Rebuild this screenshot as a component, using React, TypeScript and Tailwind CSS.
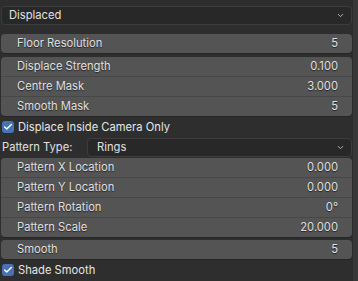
import { Check, ChevronDown } from 'lucide-react';

const font = { fontFamily: 'Inter, "Noto Sans", sans-serif' };

function Row({ label, value, first = false }: { label: string; value: string; first?: boolean }) {
  return (
    <div
      className={`flex items-center justify-between pl-[16px] pr-[14px] text-[11.2px] text-[#e0e0e0] [text-shadow:0_1px_1px_rgba(0,0,0,0.6)] ${
        first ? 'h-[19px]' : 'h-[20px] border-t border-[#474747]'
      }`}
    >
      <span>{label}</span>
      <span>{value}</span>
    </div>
  );
}

function Group({ rows }: { rows: [string, string][] }) {
  return (
    <div className="rounded-[4px] bg-[#545454] shadow-[0_1px_0_#262626] overflow-hidden">
      {rows.map(([l, v], i) => (
        <Row key={l} label={l} value={v} first={i === 0} />
      ))}
    </div>
  );
}

function Dropdown({ text, className = '' }: { text: string; className?: string }) {
  return (
    <div
      className={`h-[19px] flex items-center justify-between rounded-[4px] bg-[#282828] border border-[#3d3d3d] pr-[6px] text-[11.2px] text-[#e0e0e0] ${className}`}
    >
      <span>{text}</span>
      <ChevronDown size={9} strokeWidth={2.2} className="text-[#d0d0d0]" />
    </div>
  );
}

function CheckRow({ label }: { label: string }) {
  return (
    <div className="flex items-center gap-[4px] pl-[1px] text-[11.2px] text-[#e6e6e6]">
      <div className="w-[12px] h-[12px] rounded-[3px] bg-[#4772b3] flex items-center justify-center">
        <Check size={10} strokeWidth={3.5} className="text-white" />
      </div>
      <span>{label}</span>
    </div>
  );
}

export default function App() {
  return (
    <div className="w-[358px] h-[281px] bg-[#2e2e2e] flex overflow-hidden" style={font}>
      <div className="w-[353px] pl-[1px] pr-[1px] pt-[6px] flex flex-col">
        <Dropdown text="Displaced" className="pl-[7px]" />

        <div className="mt-[9px]">
          <Group rows={[['Floor Resolution', '5']]} />
        </div>

        <div className="mt-[4px]">
          <Group
            rows={[
              ['Displace Strength', '0.100'],
              ['Centre Mask', '3.000'],
              ['Smooth Mask', '5'],
            ]}
          />
        </div>

        <div className="h-[22px] flex items-center">
          <CheckRow label="Displace Inside Camera Only" />
        </div>

        <div className="flex items-center">
          <span className="w-[86px] pl-[1px] text-[11.2px] text-[#e0e0e0]">Pattern Type:</span>
          <Dropdown text="Rings" className="flex-1 pl-[9px]" />
        </div>

        <div className="mt-[1px]">
          <Group
            rows={[
              ['Pattern X Location', '0.000'],
              ['Pattern Y Location', '0.000'],
              ['Pattern Rotation', '0°'],
              ['Pattern Scale', '20.000'],
            ]}
          />
        </div>

        <div className="mt-[3px]">
          <Group rows={[['Smooth', '5']]} />
        </div>

        <div className="h-[22px] flex items-center">
          <CheckRow label="Shade Smooth" />
        </div>
      </div>
      <div className="w-[5px] bg-[#383838]" />
    </div>
  );
}
